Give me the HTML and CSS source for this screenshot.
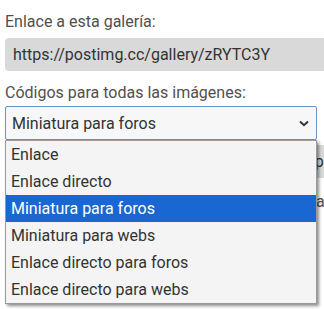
FILE: index.html
```html
<!DOCTYPE html>
<html lang="es">
<head>
    <meta charset="UTF-8">
    <meta name="viewport" content="width=device-width, initial-scale=1.0">
    <title>Galería</title>
    <link rel="stylesheet" href="styles.css">
</head>
<body>
    <div class="page">
        <label class="field-label" for="galleryLink">Enlace a esta galería:</label>
        <div class="link-box" id="galleryLink">https://postimg.cc/gallery/zRYTC3Y</div>

        <label class="field-label spaced" for="codeSelect">Códigos para todas las imágenes:</label>
        <div class="select-wrap">
            <div class="select-box" id="codeSelect">
                <span>Miniatura para foros</span>
                <svg class="chevron" width="10" height="7" viewBox="0 0 10 7">
                    <path d="M1 1.5 L5 5.2 L9 1.5" fill="none" stroke="#333" stroke-width="2"/>
                </svg>
            </div>
            <ul class="options">
                <li>Enlace</li>
                <li>Enlace directo</li>
                <li class="selected">Miniatura para foros</li>
                <li>Miniatura para webs</li>
                <li>Enlace directo para foros</li>
                <li>Enlace directo para webs</li>
            </ul>
        </div>

        <div class="code-box">[url=https://postimg.cc/gallery/zRYTC3Y]pp</div>
        <p class="note">Haz clic en el código para copiarlo al portapapeles o</p>
    </div>
</body>
</html>
```

FILE: styles.css
```css
body {
    margin: 0;
    background: #fff;
    font-family: Roboto, "Noto Sans", sans-serif;
}
.page {
    box-sizing: border-box;
    width: 324px;
    height: 309px;
    overflow: hidden;
    padding: 12px 0 0 5px;
}
.field-label {
    display: block;
    font-size: 16px;
    line-height: 20px;
    color: #505050;
    margin-bottom: 6px;
}
.field-label.spaced {
    margin-top: 12px;
    margin-bottom: 3px;
}
.link-box {
    width: 340px;
    background: #d9d9d9;
    border-radius: 4px;
    height: 33px;
    line-height: 33px;
    padding: 0 8px;
    font-size: 16px;
    color: #333;
}
.select-wrap {
    position: relative;
    width: 312px;
}
.select-box {
    box-sizing: border-box;
    height: 34px;
    border: 1px solid #6d93c6;
    border-radius: 2px;
    background: #f7f7f7;
    display: flex;
    align-items: center;
    justify-content: space-between;
    padding: 0 7px 0 6px;
    font-size: 16px;
    color: #333;
}
.options {
    position: absolute;
    top: 100%;
    left: 0;
    right: 0;
    margin: 0;
    padding: 0;
    list-style: none;
    background: #f4f4f4;
    border: 1px solid #9a9a9a;
    box-shadow: 2px 2px 3px rgba(0, 0, 0, 0.45);
    z-index: 2;
}
.options li {
    height: 27px;
    line-height: 27px;
    padding-left: 5px;
    font-size: 16px;
    color: #333;
}
.options li.selected {
    background: #1967d2;
    color: #fff;
}
.code-box {
    width: 340px;
    margin-top: 5px;
    background: #d9d9d9;
    border-radius: 4px;
    height: 33px;
    line-height: 33px;
    padding: 0 8px;
    font-size: 16px;
    color: #333;
    white-space: nowrap;
}
.note {
    margin: 14px 0 0;
    font-size: 16px;
    color: #505050;
    white-space: nowrap;
}
```
